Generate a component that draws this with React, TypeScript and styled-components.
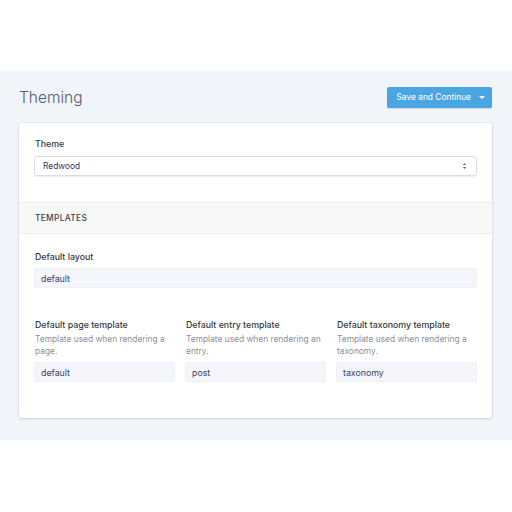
import React from 'react';
import styled, { createGlobalStyle } from 'styled-components';

const GlobalStyle = createGlobalStyle`
  html, body {
    margin: 0;
    padding: 0;
    background: #ffffff;
    font-family: Inter, "Liberation Sans", Arial, sans-serif;
  }
`;

const Page = styled.div`
  padding-top: 71px;
  height: 512px;
  box-sizing: border-box;
`;

const Main = styled.main`
  background: #f1f4f9;
  padding: 15px 20px 22px 19px;
`;

const Header = styled.header`
  display: flex;
  align-items: center;
  justify-content: space-between;
  height: 22px;
  margin-bottom: 15px;
`;

const Title = styled.h1`
  margin: 0;
  font-size: 15.5px;
  font-weight: 300;
  color: #555a78;
`;

const SplitButton = styled.div`
  display: flex;
  align-items: stretch;
  height: 21px;
  background: #4aa6e2;
  border-radius: 2px;
  box-shadow: 0 1px 1px rgba(0, 0, 0, 0.12);
  color: #ffffff;
`;

const ButtonLabel = styled.button`
  border: none;
  background: transparent;
  color: inherit;
  font-family: inherit;
  font-size: 8.4px;
  font-weight: 400;
  padding: 0 0 0 9px;
  cursor: pointer;
`;

const ButtonCaret = styled.span`
  display: flex;
  align-items: center;
  justify-content: center;
  width: 21px;
`;

const Card = styled.section`
  background: #ffffff;
  border-radius: 3px;
  box-shadow: 0 1px 3px rgba(30, 40, 80, 0.14), 0 0 0 1px rgba(30, 40, 80, 0.03);
  overflow: hidden;
`;

const CardBody = styled.div<{ $top: number; $bottom: number }>`
  padding: ${p => p.$top}px 15px ${p => p.$bottom}px 15px;
`;

const SectionHead = styled.div`
  background: #f8f8f9;
  border-top: 1px solid #ececee;
  border-bottom: 1px solid #ececee;
  height: 30px;
  display: flex;
  align-items: center;
  padding: 0 16px;
  font-size: 8.4px;
  font-weight: 500;
  letter-spacing: 0.3px;
  color: #3d4250;
  text-transform: uppercase;
`;

const Label = styled.div`
  font-size: 8.8px;
  font-weight: 500;
  color: #35383f;
  margin: 0 0 0 1px;
  line-height: 12px;
`;

const Help = styled.div`
  font-size: 8.4px;
  color: #8d9099;
  line-height: 12px;
  margin: 2px 0 0 1px;
`;

const Select = styled.div`
  margin-top: 6px;
  height: 20px;
  box-sizing: border-box;
  border: 1px solid #dcdde2;
  border-radius: 3px;
  box-shadow: 0 1px 1px rgba(0, 0, 0, 0.07);
  display: flex;
  align-items: center;
  justify-content: space-between;
  padding: 0 9px 0 8px;
  font-size: 8.4px;
  color: #33375a;
`;

const TextInput = styled.div`
  margin-top: 5px;
  height: 20px;
  box-sizing: border-box;
  background: #f4f6fb;
  border: 1px solid #eef0f6;
  border-radius: 2px;
  display: flex;
  align-items: center;
  padding: 0 6px;
  font-size: 8.8px;
  color: #3a3e66;
`;

const Columns = styled.div`
  display: grid;
  grid-template-columns: repeat(3, 1fr);
  gap: 10px;
  margin-top: 31px;
`;

const Field = styled.div`
  display: flex;
  flex-direction: column;
`;

const Caret = () => (
  <svg width="6" height="3" viewBox="0 0 6 3">
    <path d="M0 0h6L3 3z" fill="#ffffff" />
  </svg>
);

const UpDown = () => (
  <svg width="5" height="8" viewBox="0 0 5 8">
    <path d="M0.7 3L2.5 1L4.3 3z M0.7 5L2.5 7L4.3 5z" fill="#6c7078" />
  </svg>
);

const templates = [
  { label: 'Default page template', help: 'Template used when rendering a page.', value: 'default' },
  { label: 'Default entry template', help: 'Template used when rendering an entry.', value: 'post' },
  { label: 'Default taxonomy template', help: 'Template used when rendering a taxonomy.', value: 'taxonomy' },
];

export default function App() {
  return (
    <Page>
      <GlobalStyle />
      <Main>
        <Header>
          <Title>Theming</Title>
          <SplitButton>
            <ButtonLabel>Save and Continue</ButtonLabel>
            <ButtonCaret>
              <Caret />
            </ButtonCaret>
          </SplitButton>
        </Header>

        <Card>
          <CardBody $top={15} $bottom={26}>
            <Label>Theme</Label>
            <Select>
              <span>Redwood</span>
              <UpDown />
            </Select>
          </CardBody>

          <SectionHead>Templates</SectionHead>

          <CardBody $top={17} $bottom={36}>
            <Label>Default layout</Label>
            <TextInput>default</TextInput>

            <Columns>
              {templates.map(t => (
                <Field key={t.label}>
                  <Label>{t.label}</Label>
                  <Help>{t.help}</Help>
                  <TextInput>{t.value}</TextInput>
                </Field>
              ))}
            </Columns>
          </CardBody>
        </Card>
      </Main>
    </Page>
  );
}
